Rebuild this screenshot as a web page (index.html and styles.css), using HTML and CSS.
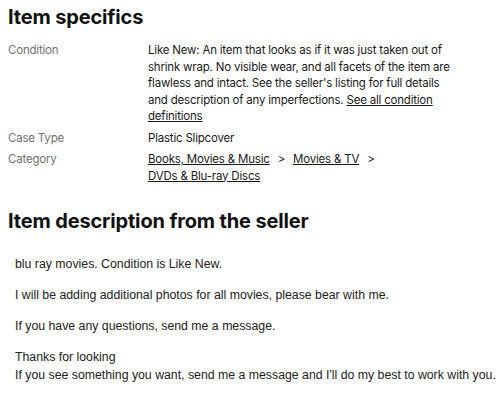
FILE: index.html
```html
<!DOCTYPE html>
<html>
<head>
<meta charset="utf-8">
<link rel="stylesheet" href="styles.css">
</head>
<body>
<section class="specs">
  <h2 class="title">Item specifics</h2>
  <dl class="grid">
    <dt class="label">Condition</dt>
    <dd class="value">Like New: An item that looks as if it was just taken out of shrink wrap. No visible wear, and all facets of the item are flawless and intact. See the seller's listing for full details and description of any imperfections. <a class="link" href="#">See all condition definitions</a></dd>
    <dt class="label">Case Type</dt>
    <dd class="value">Plastic Slipcover</dd>
    <dt class="label">Category</dt>
    <dd class="value"><a class="link" href="#">Books, Movies &amp; Music</a><span class="sep">&gt;</span><a class="link" href="#">Movies &amp; TV</a><span class="sep">&gt;</span><br><a class="link" href="#">DVDs &amp; Blu-ray Discs</a></dd>
  </dl>
</section>
<section class="desc">
  <h2 class="title">Item description from the seller</h2>
  <div class="body">
    <p class="para">blu ray movies. Condition is Like New.</p>
    <p class="para">I will be adding additional photos for all movies, please bear with me.</p>
    <p class="para">If you have any questions, send me a message.</p>
    <p class="para">Thanks for looking<br>If you see something you want, send me a message and I'll do my best to work with you.</p>
  </div>
</section>
</body>
</html>
```
FILE: styles.css
```css
html, body { background: #fff; }
body {
  margin: 0;
  padding: 0 8px;
  font-family: Inter, "Open Sans", sans-serif;
  color: #191919;
}
.title {
  margin: 0;
  padding-top: 4px;
  font-size: 20px;
  line-height: 26px;
  font-weight: 700;
  letter-spacing: -0.15px;
  color: #111;
}
.grid {
  margin: 12px 0 0;
  display: grid;
  grid-template-columns: 140px 310px;
  row-gap: 5px;
  font-size: 11.5px;
  line-height: 16.5px;
  letter-spacing: -0.2px;
}
.label { color: #707070; margin: 0; }
.value { margin: 0; color: #191919; }
.link { color: #191919; text-decoration: underline; }
.sep { display: inline-block; margin: 0 8px; }
.desc { margin-top: 20px; margin-right: -8px; }
.body {
  padding: 21px 0 0 7px;
  font-family: "Liberation Sans", Arial, sans-serif;
  font-size: 12.3px;
  line-height: 18px;
  color: #222;
}
.para { margin: 0 0 13px; white-space: nowrap; }
```
